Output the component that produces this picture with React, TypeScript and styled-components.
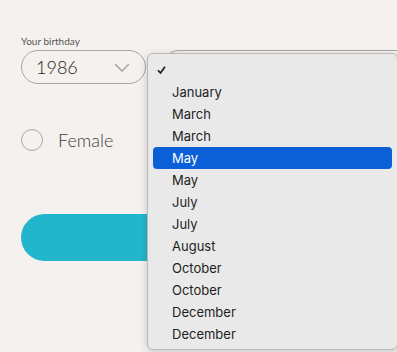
import React from 'react';
import styled, { createGlobalStyle } from 'styled-components';

const GlobalStyle = createGlobalStyle`
    html, body {
        margin: 0;
        padding: 0;
        background: #f4f1ee;
        overflow: hidden;
    }
    body {
        width: 397px;
        height: 352px;
        font-family: Lato, "Noto Sans", sans-serif;
    }
`

const Page = styled.div`
    position: relative;
    width: 397px;
    height: 352px;
    overflow: hidden;
`

const Form = styled.div`
    display: flex;
    flex-direction: column;
    padding: 36px 0 0 21px;
`

const Label = styled.span`
    font-size: 10px;
    line-height: 10px;
    color: #555;
    margin-bottom: 4px;
`

const SelectRow = styled.div`
    display: flex;
    gap: 16px;
`

const Select = styled.div<{ $width: number }>`
    box-sizing: border-box;
    flex: none;
    width: ${p => p.$width}px;
    height: 34px;
    border: 1px solid #a8a5a2;
    border-radius: 17px;
    display: flex;
    align-items: center;
    justify-content: space-between;
    padding: 0 15px 0 14px;
    font-size: 18px;
    font-weight: 300;
    color: #1c1c1c;
`

const RadioRow = styled.div`
    display: flex;
    align-items: center;
    gap: 15px;
    margin-top: 45px;
    font-size: 18px;
    font-weight: 300;
    color: #3c3c3c;
`

const Radio = styled.span`
    box-sizing: border-box;
    width: 22px;
    height: 22px;
    border-radius: 50%;
    border: 1.5px solid #a9a6a3;
`

const SubmitButton = styled.div`
    margin-top: 63px;
    width: 380px;
    height: 47px;
    border-radius: 24px;
    background: #22b6cc;
`

const Menu = styled.div`
    position: absolute;
    left: 147px;
    top: 53px;
    box-sizing: border-box;
    width: 251px;
    height: 297px;
    padding: 5px 5px;
    background: #e9e9e9;
    border: 1px solid #b9b9b9;
    border-radius: 6px;
    box-shadow: 0 2px 8px rgba(0, 0, 0, 0.18);
    font-family: Inter, "Liberation Sans", sans-serif;
    font-size: 13px;
`

const Item = styled.div<{ $active?: boolean }>`
    position: relative;
    height: 22px;
    line-height: 22px;
    padding-left: 19px;
    border-radius: 4px;
    color: ${p => p.$active ? '#fff' : '#1e1e1e'};
    background: ${p => p.$active ? '#0b60d8' : 'transparent'};
`

const Check = styled.svg`
    position: absolute;
    left: 4px;
    top: 7px;
`

const months = ['January', 'March', 'March', 'May', 'May', 'July', 'July', 'August', 'October', 'October', 'December', 'December'];

const App: React.FC = () => {
    return <Page>
        <GlobalStyle />
        <Form>
            <Label>Your birthday</Label>
            <SelectRow>
                <Select $width={125}>
                    <span>1986</span>
                    <svg width="16" height="9" viewBox="0 0 16 9">
                        <path d="M1 1 L8 8 L15 1" fill="none" stroke="#a9a6a3" strokeWidth="1.6" />
                    </svg>
                </Select>
                <Select $width={260} />
            </SelectRow>
            <RadioRow>
                <Radio />
                <span>Female</span>
            </RadioRow>
            <SubmitButton />
        </Form>
        <Menu>
            <Item>
                <Check width="9" height="8" viewBox="0 0 9 8">
                    <path d="M1 4.2 L3.5 7 L8 0.8" fill="none" stroke="#1e1e1e" strokeWidth="1.7" />
                </Check>
            </Item>
            {months.map((m, i) => <Item key={i} $active={i === 3}>{m}</Item>)}
        </Menu>
    </Page>;
}

export default App;
